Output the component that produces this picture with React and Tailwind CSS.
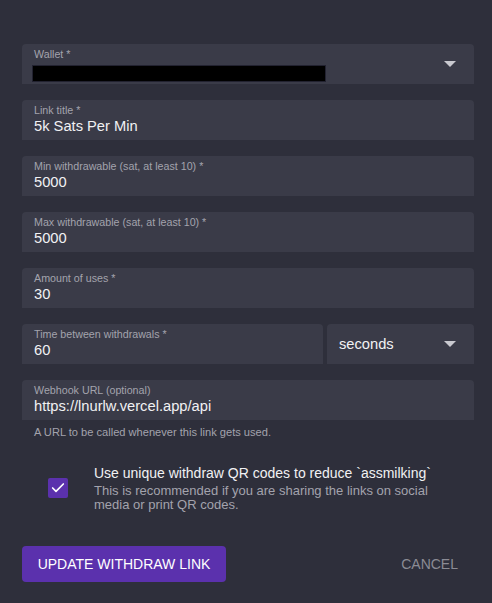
import { Check } from 'lucide-react'

function Caret() {
  return (
    <svg width="12" height="6" viewBox="0 0 12 6" className="shrink-0">
      <path d="M0 0h12L6 6z" fill="#c9c9d0" />
    </svg>
  )
}

function Field({ label, value, className = '', children }) {
  return (
    <div className={`h-10 rounded-t-[4px] bg-[#3a3b48] pl-3 pr-6 flex items-center ${className}`}>
      <div className="flex-1 min-w-0 self-start pt-[4px]">
        <div className="text-[10.7px] leading-[13px] text-[#a3a3ad]">{label}</div>
        {value != null && <div className="text-[14.7px] leading-[18px] text-[#f1f1f3]">{value}</div>}
        {children}
      </div>
    </div>
  )
}

export default function App() {
  return (
    <div className="min-h-[603px] w-[492px] bg-[#2e2f3b] pt-[44px] pl-[22px] pr-[18px] font-['Liberation_Sans',Arial,sans-serif]">
      <div className="flex flex-col gap-4">
        <div className="h-10 rounded-t-[4px] bg-[#3a3b48] pl-[10px] pr-[18px] flex items-center">
          <div className="flex-1 self-start pt-[4px]">
            <div className="pl-[2px] text-[10.7px] leading-[13px] text-[#a3a3ad]">Wallet *</div>
            <div className="mt-[4px] h-[17px] w-[294px] bg-black border border-[#222230]" />
          </div>
          <Caret />
        </div>

        <Field label="Link title *" value="5k Sats Per Min" />
        <Field label="Min withdrawable (sat, at least 10) *" value="5000" />
        <Field label="Max withdrawable (sat, at least 10) *" value="5000" />
        <Field label="Amount of uses *" value="30" />

        <div className="flex gap-1">
          <Field label="Time between withdrawals *" value="60" className="w-[301px]" />
          <div className="flex-1 h-10 rounded-t-[4px] bg-[#3a3b48] pl-3 pr-[18px] flex items-center justify-between">
            <span className="text-[14.7px] text-[#f1f1f3]">seconds</span>
            <Caret />
          </div>
        </div>

        <div>
          <Field label="Webhook URL (optional)" value="https://lnurlw.vercel.app/api" />
          <div className="pl-3 pt-[6px] text-[11.1px] leading-[13px] text-[#a3a3ad]">A URL to be called whenever this link gets used.</div>
        </div>
      </div>

      <div className="mt-[25px] flex items-center">
        <div className="w-[72px] flex justify-center">
          <div className="w-5 h-5 rounded-[2px] bg-[#5b31ad] flex items-center justify-center">
            <Check size={16} strokeWidth={2.5} color="#ffffff" />
          </div>
        </div>
        <div>
          <div className="text-[14px] leading-[18px] text-[#f1f1f3]">Use unique withdraw QR codes to reduce `assmilking`</div>
          <div className="mt-[2px] text-[13px] leading-[14px] text-[#a3a3ad]">
            This is recommended if you are sharing the links on social<br />media or print QR codes.
          </div>
        </div>
      </div>

      <div className="mt-[34px] flex items-center justify-between">
        <button className="h-9 w-[204px] rounded-[4px] bg-[#5b31ad] text-[14px] font-medium uppercase text-white">
          Update withdraw link
        </button>
        <button className="pr-4 text-[14px] font-medium uppercase text-[#8b8b94]">Cancel</button>
      </div>
    </div>
  )
}
